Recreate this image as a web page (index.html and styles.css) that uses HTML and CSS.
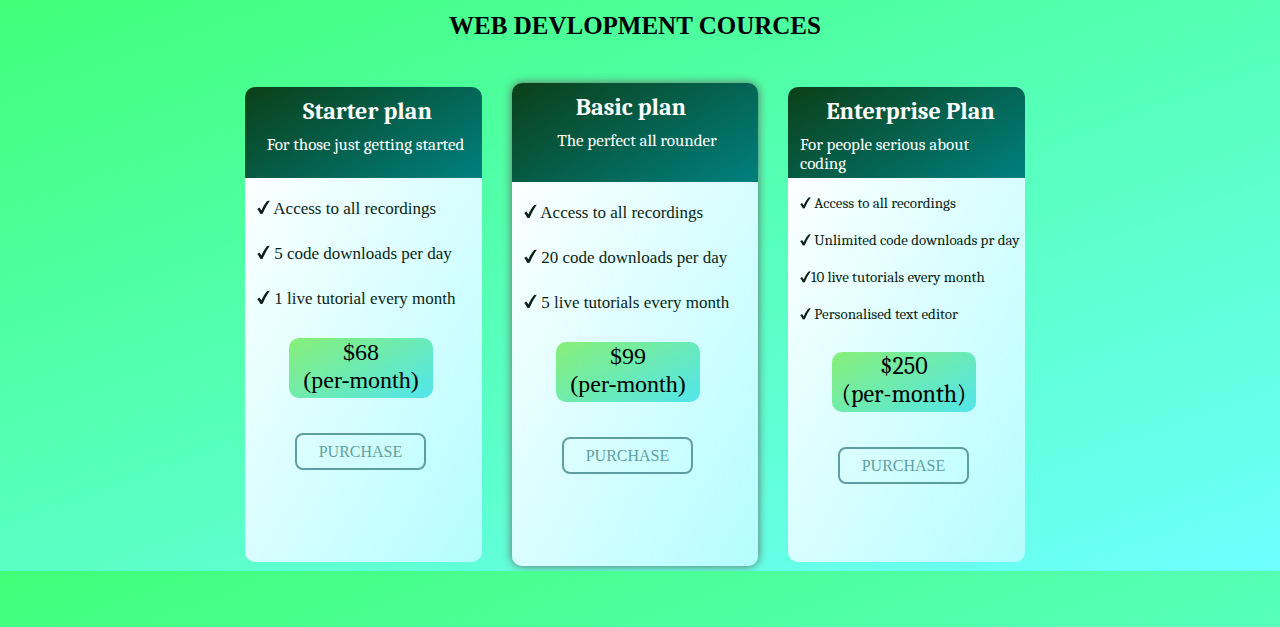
FILE: index.html
```html
<!DOCTYPE html>
<html lang="en">
<head>
<meta charset="utf-8">
<title>Web Devlopment Cources</title>
<link rel="stylesheet" href="styles.css">
</head>
<body>
<svg class="sprite" aria-hidden="true"><symbol id="tick" viewBox="0 0 14 15"><path d="M0.3 9 L2.6 7.400 C3.400 8.300 4.100 9.400 4.700 10.600 C6.500 6.500 8.600 3 11 0.500 L13.800 0.300 C10.900 4.300 8.300 9 6.100 14.300 L3.700 14.600 C2.800 12.500 1.700 10.600 0.300 9 Z"/></symbol></svg>
<h1 class="page-title">WEB DEVLOPMENT COURCES</h1>
<main class="plans">
  <section class="card">
    <header class="card-head">
      <h2 class="plan-name">Starter plan</h2>
      <p class="tagline">For those just getting started</p>
    </header>
    <div class="card-body">
      <ul class="features">
        <li><svg class="tick"><use href="#tick"/></svg> Access to all recordings</li>
        <li><svg class="tick"><use href="#tick"/></svg> 5 code downloads per day</li>
        <li><svg class="tick"><use href="#tick"/></svg> 1 live tutorial every month</li>
      </ul>
      <p class="price">$68<br>(per-month)</p>
      <button class="purchase" type="button">PURCHASE</button>
    </div>
  </section>
  <section class="card card-featured">
    <header class="card-head">
      <h2 class="plan-name">Basic plan</h2>
      <p class="tagline">The perfect all rounder</p>
    </header>
    <div class="card-body">
      <ul class="features">
        <li><svg class="tick"><use href="#tick"/></svg> Access to all recordings</li>
        <li><svg class="tick"><use href="#tick"/></svg> 20 code downloads per day</li>
        <li><svg class="tick"><use href="#tick"/></svg> 5 live tutorials every month</li>
      </ul>
      <p class="price">$99<br>(per-month)</p>
      <button class="purchase" type="button">PURCHASE</button>
    </div>
  </section>
  <section class="card card-enterprise">
    <header class="card-head">
      <h2 class="plan-name">Enterprise Plan</h2>
      <p class="tagline">For people serious about coding</p>
    </header>
    <div class="card-body">
      <ul class="features">
        <li><svg class="tick"><use href="#tick"/></svg> Access to all recordings</li>
        <li><svg class="tick"><use href="#tick"/></svg> Unlimited code downloads pr day</li>
        <li><svg class="tick"><use href="#tick"/></svg>10 live tutorials every month</li>
        <li><svg class="tick"><use href="#tick"/></svg> Personalised text editor</li>
      </ul>
      <p class="price">$250<br>(per-month)</p>
      <button class="purchase" type="button">PURCHASE</button>
    </div>
  </section>
</main>
</body>
</html>
```
FILE: styles.css
```css
* { box-sizing: border-box; }
:root {
  --times: "Liberation Serif", "Times New Roman", serif;
  --book: Cambria, Caladea, "DejaVu Serif Condensed", "DejaVu Serif", serif;
}
body {
  margin: 0;
  padding: 11px 10px 5px 0;
  font-family: var(--times);
  color: #000;
  background: linear-gradient(160deg, #40ff78, #6effff);
}
h1, h2, p, ul { margin: 0; padding: 0; }
.sprite { display: none; }
.page-title {
  font-size: 25px;
  line-height: 30px;
  text-align: center;
}
.plans {
  display: flex;
  justify-content: center;
  align-items: center;
  gap: 30px;
  margin-top: 42px;
}
.card {
  display: flex;
  flex-direction: column;
  flex: 0 1 237px;
  min-height: 475px;
  border-radius: 10px;
  overflow: hidden;
}
.card-featured {
  flex-basis: 246px;
  min-height: 483px;
  box-shadow: 0 0 10px #666;
}
.card-head {
  min-height: 91px;
  padding: 10px 12px 5px;
  color: #fff;
  font-family: var(--book);
  text-align: center;
  background: linear-gradient(150deg, #0b4018, #008080);
}
.card-featured .card-head { min-height: 99px; }
.plan-name {
  padding-left: 8px;
  font-size: 24px;
  line-height: 28px;
}
.card-featured .plan-name { padding: 0 8px 0 0; }
.tagline {
  margin-top: 10px;
  padding-left: 4px;
  font-size: 17px;
  line-height: 19px;
  white-space: nowrap;
}
.card-enterprise .tagline { padding: 0; text-align: left; white-space: normal; }
.card-body {
  flex: 1;
  padding: 20px 0 20px 12px;
  background: linear-gradient(120deg, #fcffff, #b4fdff);
}
.features {
  display: flex;
  flex-direction: column;
  gap: 24px;
  list-style: none;
  font-size: 17px;
  line-height: 21px;
  color: #0a1f16;
  white-space: nowrap;
}
.tick {
  width: 13px;
  height: 15px;
  vertical-align: -1px;
  fill: #0a1f16;
}
.card-enterprise .card-body { padding-top: 17px; }
.card-enterprise .features {
  gap: 20px;
  font-family: var(--book);
  font-size: 15px;
  line-height: 17px;
}
.card-enterprise .tick { width: 11px; height: 12px; }
.price {
  width: 144px;
  margin: 29px 0 0 32px;
  padding-bottom: 4px;
  border-radius: 10px;
  font-size: 24px;
  line-height: 28px;
  text-align: center;
  background: linear-gradient(150deg, #87f078, #52e5ec);
}
.card-enterprise .price { font-family: var(--book); }
.purchase {
  display: block;
  width: 131px;
  height: 37px;
  margin: 35px 0 0 38px;
  padding: 0;
  border: 2px solid #5f9ea0;
  border-radius: 8px;
  background: transparent;
  color: #5f9ea0;
  font-family: var(--times);
  font-size: 16px;
}
```
